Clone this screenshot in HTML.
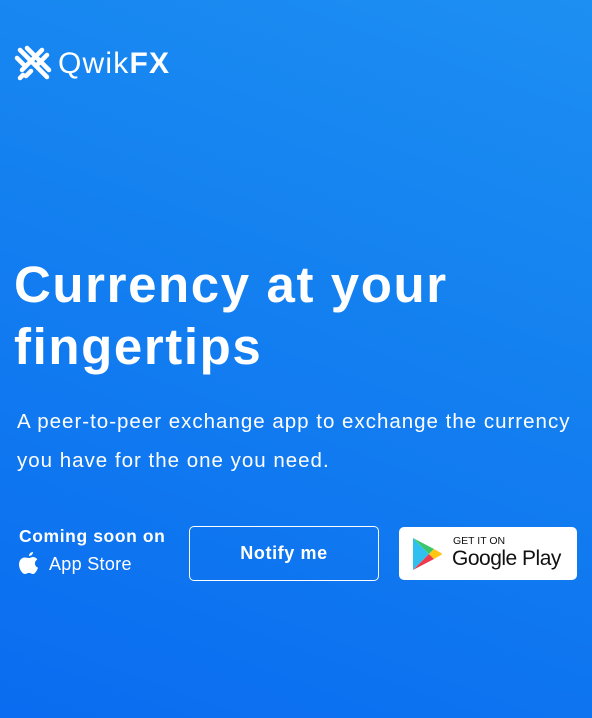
<!DOCTYPE html>
<html><head><style>
html,body{margin:0;padding:0}
body{width:592px;height:718px;overflow:hidden;position:relative;font-family:"Liberation Sans",sans-serif;color:#fff;
background:linear-gradient(200deg,#1d8ff2 0%,#137ff0 45%,#0a6cf0 100%);}
.logo{position:absolute;left:14px;top:45px;display:flex;align-items:center}
.logo span{font-size:30px;margin-left:6px;letter-spacing:1.2px}
h1{position:absolute;left:14px;top:254px;margin:0;font-size:51px;line-height:62px;font-weight:bold;letter-spacing:1.6px}
p{position:absolute;left:17px;top:402px;margin:0;font-size:20.5px;line-height:39px;width:575px;letter-spacing:1px}
.cs{position:absolute;left:19px;top:526px;font-weight:bold;font-size:17.5px;letter-spacing:0.6px}
.as{position:absolute;left:19px;top:552px;display:flex;align-items:center;font-size:18px;letter-spacing:0.3px}
.nb{position:absolute;left:189px;top:526px;width:190px;height:55px;border:1px solid #fff;border-radius:5px;box-sizing:border-box;display:flex;align-items:center;justify-content:center;font-weight:bold;font-size:18px;letter-spacing:0.6px}
.gp{position:absolute;left:399px;top:527px;width:178px;height:53px;background:#fff;border-radius:5px;color:#111}
</style></head><body>
<div class="logo">
<svg width="38" height="38" viewBox="0 0 38 38"><g stroke="#fff" stroke-width="4.5" stroke-linecap="round" fill="none">
<path d="M6 5L33 32M13 3L35 25M3 13L11 21M28 5L8 25M33 10L24 19M17 26L12 31M9 30L6 33"/></g></svg>
<span>Qwik<b>FX</b></span></div>
<h1>Currency at your<br>fingertips</h1>
<p>A peer-to-peer exchange app to exchange the currency you have for the one you need.</p>
<div class="cs">Coming soon on</div>
<div class="as"><svg width="20" height="24" viewBox="0 0 20 24"><path fill="#fff" d="M14 0c0 2-1.5 4-4 4 0-2 1.7-4 4-4zM10 6c1.5 0 2.5-1 4-1 2 0 3.5 1.2 4.3 2.5-3.5 2-3 6.8.7 8.2-1 2.8-3 6.3-5 6.3-1.5 0-2-1-4-1s-2.5 1-4 1C3 22 0 16.5 0 12.5 0 8 3 5.5 5.5 5.5 7.5 5.5 8.5 6 10 6z"/></svg><span style="margin-left:10px">App Store</span></div>
<div class="nb">Notify me</div>
<div class="gp">
<svg style="position:absolute;left:13px;top:10px" width="31" height="34" viewBox="0 0 31 34">
<path d="M1 1L17 17 1 33z" fill="#2fc0ef"/><path d="M1 1L22 12 17 17z" fill="#3bc66c"/><path d="M1 33L22 22 17 17z" fill="#ee3a4f"/><path d="M22 12L29 16Q31 17 29 18L22 22 17 17z" fill="#ffc613"/></svg>
<div style="position:absolute;left:54px;top:8px;font-size:10.5px">GET IT ON</div>
<div style="position:absolute;left:53px;top:20px;font-size:21px;letter-spacing:-0.5px">Google Play</div>
</div>
</body></html>
